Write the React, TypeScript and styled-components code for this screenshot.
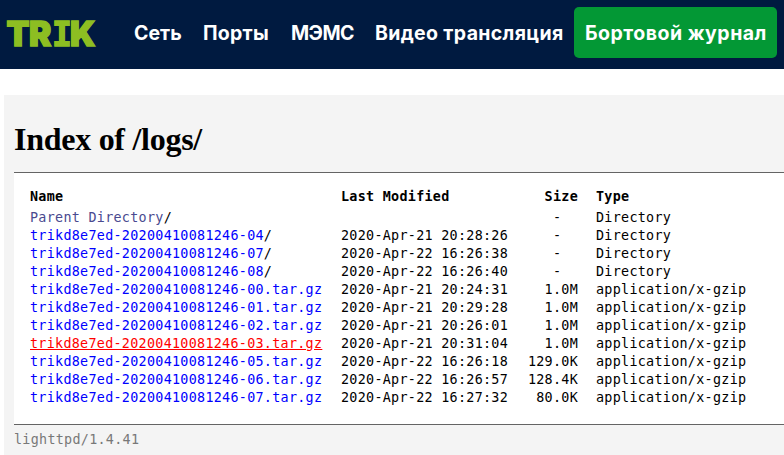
import React from "react";
import styled, { createGlobalStyle } from "styled-components";

const GlobalStyle = createGlobalStyle`
  * { box-sizing: border-box; }
  body { margin: 0; background: #fff; overflow: hidden; }
`;

const Page = styled.div`
  display: flex;
  flex-direction: column;
  height: 455px;
`;

const Navbar = styled.nav`
  display: flex;
  align-items: center;
  height: 69px;
  padding: 0 7px 4px 6px;
  background: #001a40;
`;

const Logo = styled.svg`
  display: block;
  flex: none;
  width: 117px;
  height: 51px;
`;

const NavLink = styled.a<{ $width: number; $spacing: number; $active?: boolean }>`
  flex: none;
  width: ${(p) => p.$width}px;
  height: 51px;
  padding-left: 11px;
  border-radius: 5px;
  background: ${(p) => (p.$active ? "#039835" : "transparent")};
  color: #fff;
  font: 700 19.5px/53px Inter, sans-serif;
  letter-spacing: ${(p) => p.$spacing}px;
  white-space: nowrap;
`;

const Panel = styled.main`
  flex: 1;
  margin: 26px 0 0 4px;
  padding: 27px 0 0 10px;
  background: #f4f4f4;
`;

const Heading = styled.h1`
  height: 50px;
  margin: 0;
  font: bold 32px/34px "Liberation Serif", serif;
  letter-spacing: -0.27px;
  color: #000;
`;

const Listing = styled.section`
  height: 253px;
  padding: 15px 0 0 16px;
  border-top: 1px solid #646464;
  border-bottom: 1px solid #646464;
  background: #fff;
`;

const Row = styled.div<{ $header?: boolean }>`
  display: grid;
  grid-template-columns: 311px 186px 51px 1fr;
  height: ${(p) => (p.$header ? 20.5 : 18)}px;
  color: #000;
  font: ${(p) => (p.$header ? "bold" : "normal")} 13.4px/18px "DejaVu Sans Mono", monospace;
  letter-spacing: 0.29px;
  white-space: pre;
`;

const Size = styled.span`
  text-align: right;
`;

const Type = styled.span`
  padding-left: 18px;
`;

const FileLink = styled.a<{ $tone: "visited" | "link" | "hover" }>`
  color: ${(p) => ({ visited: "#4a4a90", link: "#0000ff", hover: "#ff0000" })[p.$tone]};
  text-decoration: ${(p) => (p.$tone === "hover" ? "underline" : "none")};
`;

const Footer = styled.footer`
  padding-top: 6px;
  color: #787878;
  font: 13.4px/18px "DejaVu Sans Mono", monospace;
  letter-spacing: 0.29px;
`;

const links = [
  { label: "Сеть", width: 69, spacing: 0 },
  { label: "Порты", width: 88, spacing: 0.25 },
  { label: "МЭМС", width: 84, spacing: -0.6 },
  { label: "Видео трансляция", width: 210, spacing: 0.35 },
  { label: "Бортовой журнал", width: 203, spacing: 0.5, active: true },
];

const entries = [
  ["Parent Directory", "", "-"],
  ["trikd8e7ed-20200410081246-04", "2020-Apr-21 20:28:26", "-"],
  ["trikd8e7ed-20200410081246-07", "2020-Apr-22 16:26:38", "-"],
  ["trikd8e7ed-20200410081246-08", "2020-Apr-22 16:26:40", "-"],
  ["trikd8e7ed-20200410081246-00.tar.gz", "2020-Apr-21 20:24:31", "1.0M"],
  ["trikd8e7ed-20200410081246-01.tar.gz", "2020-Apr-21 20:29:28", "1.0M"],
  ["trikd8e7ed-20200410081246-02.tar.gz", "2020-Apr-21 20:26:01", "1.0M"],
  ["trikd8e7ed-20200410081246-03.tar.gz", "2020-Apr-21 20:31:04", "1.0M"],
  ["trikd8e7ed-20200410081246-05.tar.gz", "2020-Apr-22 16:26:18", "129.0K"],
  ["trikd8e7ed-20200410081246-06.tar.gz", "2020-Apr-22 16:26:57", "128.4K"],
  ["trikd8e7ed-20200410081246-07.tar.gz", "2020-Apr-22 16:27:32", "80.0K"],
];

export default function App() {
  return (
    <Page>
      <GlobalStyle />
      <Navbar>
        <Logo viewBox="0 0 117 51">
          <text
            y="38.8"
            fill="#8dbe22"
            stroke="#8dbe22"
            strokeWidth="1.4"
            fontFamily="Inter"
            fontWeight="900"
            fontSize="33.5"
          >
            <tspan x="0.5">T</tspan>
            <tspan x="23">R</tspan>
            <tspan x="46" fontFamily="DejaVu Sans Mono" fontSize="33">I</tspan>
            <tspan x="64">K</tspan>
          </text>
        </Logo>
        {links.map((l) => (
          <NavLink key={l.label} $width={l.width} $spacing={l.spacing} $active={l.active}>
            {l.label}
          </NavLink>
        ))}
      </Navbar>
      <Panel>
        <Heading>Index of /logs/</Heading>
        <Listing>
          <Row $header>
            <span>Name</span>
            <span>Last Modified</span>
            <Size>Size</Size>
            <Type>Type</Type>
          </Row>
          {entries.map(([name, modified, size], i) => (
            <Row key={name}>
              <span>
                <FileLink $tone={i === 0 ? "visited" : name.endsWith("-03.tar.gz") ? "hover" : "link"}>
                  {name}
                </FileLink>
                {size === "-" && "/"}
              </span>
              <span>{modified}</span>
              <Size>{size === "-" ? "-  " : size}</Size>
              <Type>{size === "-" ? "Directory" : "application/x-gzip"}</Type>
            </Row>
          ))}
        </Listing>
        <Footer>lighttpd/1.4.41</Footer>
      </Panel>
    </Page>
  );
}
